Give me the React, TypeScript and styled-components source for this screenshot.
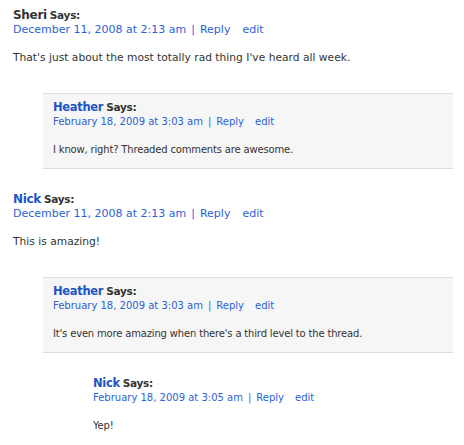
import styled, { createGlobalStyle } from "styled-components";

type CommentData = {
    author: string;
    isLink: boolean;
    date: string;
    text: string;
    replies?: CommentData[];
};

const comments: CommentData[] = [
    {
        author: "Sheri",
        isLink: false,
        date: "December 11, 2008 at 2:13 am",
        text: "That's just about the most totally rad thing I've heard all week.",
        replies: [
            {
                author: "Heather",
                isLink: true,
                date: "February 18, 2009 at 3:03 am",
                text: "I know, right? Threaded comments are awesome.",
            },
        ],
    },
    {
        author: "Nick",
        isLink: true,
        date: "December 11, 2008 at 2:13 am",
        text: "This is amazing!",
        replies: [
            {
                author: "Heather",
                isLink: true,
                date: "February 18, 2009 at 3:03 am",
                text: "It's even more amazing when there's a third level to the thread.",
                replies: [
                    {
                        author: "Nick",
                        isLink: true,
                        date: "February 18, 2009 at 3:05 am",
                        text: "Yep!",
                    },
                ],
            },
        ],
    },
];

function Comment(props: { comment: CommentData; depth: number }) {
    const c = props.comment;
    const nested = props.depth > 1;
    return (
        <CommentItem>
            <CommentBody $alt={props.depth % 2 === 0}>
                <AuthorLine $nested={nested}>
                    {c.isLink ? <AuthorLink href="#">{c.author}</AuthorLink> : <AuthorName>{c.author}</AuthorName>}
                    <Says>Says:</Says>
                </AuthorLine>
                <MetaLine $nested={nested}>
                    <MetaLink href="#">{c.date}</MetaLink>
                    <Divider>|</Divider>
                    <MetaLink href="#">Reply</MetaLink>
                    <EditLink href="#" $nested={nested}>edit</EditLink>
                </MetaLine>
                <CommentText $nested={nested}>{c.text}</CommentText>
            </CommentBody>
            {c.replies && (
                <ChildList>
                    {c.replies.map((r, i) => (
                        <Comment key={i} comment={r} depth={props.depth + 1} />
                    ))}
                </ChildList>
            )}
        </CommentItem>
    );
}

export default function App() {
    return (
        <>
            <GlobalStyle />
            <Page>
                <CommentList>
                    {comments.map((c, i) => (
                        <Comment key={i} comment={c} depth={1} />
                    ))}
                </CommentList>
            </Page>
        </>
    );
}

const GlobalStyle = createGlobalStyle`
    body {
        margin: 0;
        background: #ffffff;
        font-family: "DejaVu Sans", sans-serif;
        color: #333333;
    }
`;

const Page = styled.div`
    padding: 1px 11px 0 3px;
`;

const CommentList = styled.ul`
    list-style: none;
    margin: 0;
    padding: 0;
`;

const ChildList = styled(CommentList)`
    margin-top: 16px;
    padding-left: 40px;
`;

const CommentItem = styled.li`
    margin-bottom: 16px;
`;

const CommentBody = styled.div<{ $alt: boolean }>`
    padding: 6px 10px 11px;
    background: ${(p) => (p.$alt ? "#f6f6f6" : "transparent")};
    border-top: 1px solid ${(p) => (p.$alt ? "#dddddd" : "transparent")};
    border-bottom: 1px solid ${(p) => (p.$alt ? "#dddddd" : "transparent")};
`;

const AuthorLine = styled.div<{ $nested: boolean }>`
    font-size: ${(p) => (p.$nested ? "11.5px" : "12px")};
    line-height: 15px;
    font-weight: bold;
    letter-spacing: -0.3px;
`;

const AuthorName = styled.span`
    color: #333333;
`;

const AuthorLink = styled.a`
    color: #1e54c4;
    text-decoration: none;
`;

const Says = styled.span`
    font-size: 10.5px;
    margin-left: 3px;
    color: #333333;
`;

const MetaLine = styled.div<{ $nested: boolean }>`
    font-size: ${(p) => (p.$nested ? "10px" : "11px")};
    line-height: 14px;
`;

const MetaLink = styled.a`
    color: #2a62d4;
    text-decoration: none;
`;

const Divider = styled.span`
    color: #2a62d4;
    margin: 0 5px;
`;

const EditLink = styled(MetaLink)<{ $nested: boolean }>`
    margin-left: ${(p) => (p.$nested ? "11px" : "12px")};
`;

const CommentText = styled.p<{ $nested: boolean }>`
    margin: 14px 0 0;
    font-size: ${(p) => (p.$nested ? "10px" : "10.7px")};
    letter-spacing: ${(p) => (p.$nested ? "-0.17px" : "0")};
    line-height: 14px;
`;
